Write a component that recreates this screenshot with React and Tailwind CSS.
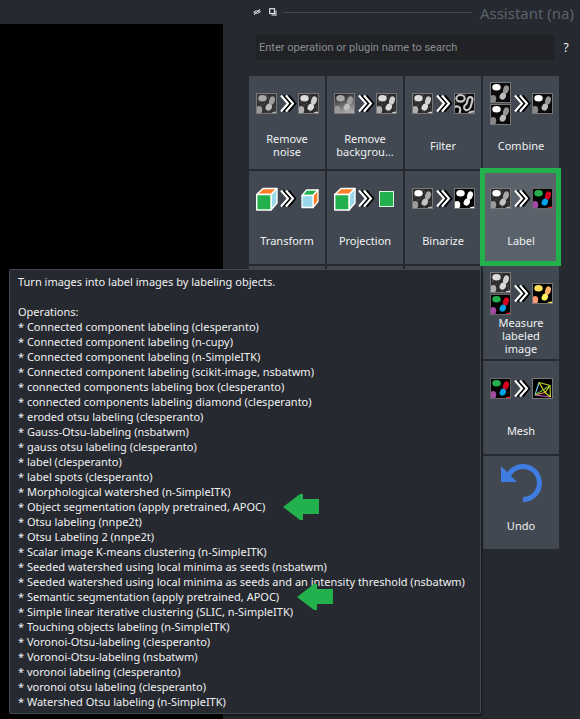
import React from "react";

const OPERATIONS = [
  "Connected component labeling (clesperanto)",
  "Connected component labeling (n-cupy)",
  "Connected component labeling (n-SimpleITK)",
  "Connected component labeling (scikit-image, nsbatwm)",
  "connected components labeling box (clesperanto)",
  "connected components labeling diamond (clesperanto)",
  "eroded otsu labeling (clesperanto)",
  "Gauss-Otsu-labeling (nsbatwm)",
  "gauss otsu labeling (clesperanto)",
  "label (clesperanto)",
  "label spots (clesperanto)",
  "Morphological watershed (n-SimpleITK)",
  "Object segmentation (apply pretrained, APOC)",
  "Otsu labeling (nnpe2t)",
  "Otsu Labeling 2 (nnpe2t)",
  "Scalar image K-means clustering (n-SimpleITK)",
  "Seeded watershed using local minima as seeds (nsbatwm)",
  "Seeded watershed using local minima as seeds and an intensity threshold (nsbatwm)",
  "Semantic segmentation (apply pretrained, APOC)",
  "Simple linear iterative clustering (SLIC, n-SimpleITK)",
  "Touching objects labeling (n-SimpleITK)",
  "Voronoi-Otsu-labeling (clesperanto)",
  "Voronoi-Otsu-labeling (nsbatwm)",
  "voronoi labeling (clesperanto)",
  "voronoi otsu labeling (clesperanto)",
  "Watershed Otsu labeling (n-SimpleITK)",
];

// Blob colours: top-left, upper lobe, lower lobe, bottom-left, bottom-right
const PALETTES = {
  gray: { bg: "#2c2c2c", c: ["#dcdcdc", "#d0d0d0", "#dcdcdc", "#b0b0b0", "#cccccc"], edge: "#777" },
  noisy: { bg: "#333", c: ["#a8a8a8", "#9c9c9c", "#bcbcbc", "#9c9c9c", "#acacac"], edge: "#777" },
  bright: { bg: "#2a2a2a", c: ["#ffffff", "#a8a8a8", "#c4c4c4", "#9c9c9c", "#b8b8b8"], edge: "#777" },
  combined: { bg: "#0c0c0c", c: ["#ffffff", "#949494", "#bcbcbc", "#888888", "#000000"], edge: "#777" },
  binary: { bg: "#000", c: ["#fff", "#fff", "#fff", "#fff", "#fff"], edge: "#777" },
  labels: { bg: "#000", c: ["#22b14c", "#d8001f", "#00a2e8", "#a349a4", "#ed1c24"], edge: "#666" },
  measured: { bg: "#000", c: ["#ffe05e", "#ffae66", "#fff35c", "#ff9673", "#fff35c"], edge: "#777" },
};

function Tile({ x, y, kind }) {
  const fade = kind === "faded";
  const p = PALETTES[fade ? "noisy" : kind];
  return (
    <svg x={x} y={y} width="21" height="21" viewBox="0 0 21 21">
      {fade && (
        <defs>
          <linearGradient id="haze" x1="0" y1="0" x2="0.3" y2="1">
            <stop offset="0" stopColor="#181818" />
            <stop offset="0.4" stopColor="#4a4a4a" />
            <stop offset="1" stopColor="#a4a4a4" />
          </linearGradient>
        </defs>
      )}
      <rect width="21" height="21" fill={fade ? "url(#haze)" : p.bg} />
      {(kind === "gray" || kind === "noisy" || kind === "bright") && (
        <path
          d="M10 2h2M12 4h1M2 9h2M5 12h2M8 10h1M9 16h2M11 19h2M17 14h2M18 17h1M1 2h1M9 13h1"
          stroke="#666"
          opacity="0.7"
        />
      )}
      <ellipse cx="6.5" cy="5.300" rx="4.200" ry="3.3" fill={p.c[0]} />
      <ellipse cx="16" cy="7.500" rx="2.800" ry="4.300" transform="rotate(18 16 7.5)" fill={p.c[1]} />
      <ellipse cx="12.800" cy="14.200" rx="3" ry="3.6" transform="rotate(30 12.8 14.2)" fill={p.c[2]} />
      <path d="M0 15C1 13 4 12 5.5 14C7 16 6 19 5 21H0Z" fill={p.c[3]} />
      <path d="M15 21C15.5 19 18 18.4 21 18.5V21Z" fill={p.c[4]} />
      <rect x="0.5" y="0.5" width="20" height="20" fill="none" stroke={p.edge} />
    </svg>
  );
}

function EdgeTile({ x, y }) {
  return (
    <svg x={x} y={y} width="21" height="21" viewBox="0 0 21 21">
      <rect width="21" height="21" fill="#0c0c0c" />
      <g fill="none" stroke="#c8c8c8" strokeWidth="2.100">
        <ellipse cx="6.5" cy="5.300" rx="4.200" ry="3.3" />
        <path d="M14 5.500C15 3.300 18.700 3.700 18.500 6.500C18.200 9 17.500 10.500 17 12.500C16.500 15.800 14 17.800 11.500 16.900C9 15.500 10 12.500 12 11.300C13.500 10.300 13 7.500 14 5.500Z" />
        <path d="M0 14.500C2.500 12.500 6 13.500 6.200 16C6.300 18 5.500 19.500 5.500 21" />
        <path d="M14.500 21C15 19 18 18.500 21 18.500" />
        <path d="M0 9L3 10M10 0L12 3" stroke="#555" strokeWidth="1" />
      </g>
      <rect x="0.5" y="0.5" width="20" height="20" fill="none" stroke="#777" />
    </svg>
  );
}

function MeshTile({ x, y }) {
  return (
    <svg x={x} y={y} width="21" height="21" viewBox="0 0 21 21">
      <rect x="0.5" y="0.5" width="20" height="20" fill="#000" stroke="#777" />
      <g fill="none" strokeWidth="1.2">
        <path d="M7 4.500L3 17" stroke="#7dc4ee" />
        <path d="M3 17L18.500 19" stroke="#d65bd0" />
        <path d="M7 4.500L18 7.500L18.500 19" stroke="#b5c82b" />
        <path d="M7 4.500L13 14.500L18 7.500M13 14.500L18.500 19" stroke="#d9e021" />
        <path d="M3 17L13 14.500" stroke="#f2a35c" />
        <path d="M3 17L18 7.500" stroke="#7bbf3a" />
      </g>
    </svg>
  );
}

function BigCube() {
  return (
    <g stroke="#fff" strokeWidth="1.4" strokeLinejoin="round">
      <path d="M0.700 17.500L7 11.500H21L15 17.500Z" fill="#ff7f27" />
      <path d="M15 17.500L21 11.500V26L15 33Z" fill="#99d9ea" />
      <path d="M0.700 17.500H15V33H0.700Z" fill="#22b14c" />
    </g>
  );
}

function SmallCube() {
  return (
    <g stroke="#fff" strokeWidth="1.3" strokeLinejoin="round">
      <path d="M46 18.500L50.500 13H62L57 18.500Z" fill="#22b14c" />
      <path d="M57 18.500L62 13V24.500L57 30.500Z" fill="#ff7f27" />
      <path d="M46 18.500H57V30.500H46Z" fill="#99d9ea" />
    </g>
  );
}

function Chevrons() {
  return (
    <g fill="none">
      <path d="M27 13.500L34.500 21.500L27 29.500M32.500 13.500L39 21.500L32.500 29.500" stroke="#000" strokeWidth="2.400" />
      <path d="M25 13.500L32 21.500L25 29.500M30 13.500L37 21.500L30 29.500" stroke="#fff" strokeWidth="2.100" />
    </g>
  );
}

function Pair({ children }) {
  return (
    <svg width="64" height="44" viewBox="-1 0 64 44" aria-hidden="true">
      {children}
      <Chevrons />
    </svg>
  );
}

const single = (from, to) => (
  <Pair>
    <Tile x={0} y={11} kind={from} />
    <Tile x={42} y={11} kind={to} />
  </Pair>
);

const TOOLS = [
  { label: "Remove noise", icon: single("noisy", "gray") },
  { label: "Remove backgrou...", icon: single("faded", "gray") },
  { label: "Filter", icon: <Pair><Tile x={0} y={11} kind="gray" /><EdgeTile x={42} y={11} /></Pair> },
  {
    label: "Combine",
    icon: (
      <Pair>
        <Tile x={0} y={0} kind="combined" />
        <Tile x={0} y={22} kind="combined" />
        <Tile x={42} y={11} kind="combined" />
      </Pair>
    ),
  },
  { label: "Transform", icon: <Pair><BigCube /><SmallCube /></Pair> },
  {
    label: "Projection",
    icon: (
      <Pair>
        <BigCube />
        <rect x="45.500" y="14.500" width="14" height="15" fill="#22b14c" stroke="#d5f5df" />
      </Pair>
    ),
  },
  { label: "Binarize", icon: single("bright", "binary") },
  { label: "Label", icon: single("bright", "labels"), active: true },
  { label: "" },
  { label: "" },
  { label: "" },
  {
    label: "Measure labeled image",
    icon: (
      <Pair>
        <Tile x={0} y={0} kind="gray" />
        <Tile x={0} y={22} kind="labels" />
        <Tile x={42} y={11} kind="measured" />
      </Pair>
    ),
  },
  { label: "Mesh", last: true, icon: <Pair><Tile x={0} y={11} kind="labels" /><MeshTile x={42} y={11} /></Pair> },
  {
    label: "Undo",
    last: true,
    icon: (
      <svg width="64" height="44" viewBox="-1 0 64 44" aria-hidden="true">
        <path d="M18.500 13A16.500 16.500 0 1 1 33 37.500" fill="none" stroke="#3f7de0" strokeWidth="5" />
        <path d="M11 4V20H27Z" fill="#3f7de0" />
      </svg>
    ),
  },
];

function ToolButton({ tool }) {
  return (
    <button
      type="button"
      aria-label={tool.label || "More operations"}
      className={`relative flex h-[93px] flex-col items-center pt-1.5 text-[11px] leading-[13px] text-[#f0f1f2] ${
        tool.active ? "bg-[#5a626c]" : "bg-[#414851]"
      } ${tool.last ? "col-start-4" : ""}`}
    >
      {tool.icon}
      <span className="flex h-[38px] w-full items-center justify-center px-2 text-center">{tool.label}</span>
      {tool.active && (
        <span className="pointer-events-none absolute -top-[3px] -right-0.5 -bottom-0.5 -left-[3px] z-10 border-5 border-[#22b14c]" />
      )}
    </button>
  );
}

function Arrow() {
  return (
    <svg
      className="absolute top-1/2 left-full ml-[18px] -translate-y-1/2"
      width="36"
      height="26"
      viewBox="0 0 36 26"
      aria-hidden="true"
    >
      <path d="M0 13L17 0H20V5H36V20H20V26H17Z" fill="#22b14c" />
    </svg>
  );
}

export default function App() {
  return (
    <div className="relative flex min-h-screen flex-col overflow-hidden bg-[#262930] pt-6 font-['Noto_Sans','Open_Sans',sans-serif] text-[#f0f1f2]">
      <div className="flex flex-1">
        <main className="flex-1 bg-black" />
        <aside className="-mt-6 w-[357px] pl-[26px]">
          <header className="flex h-6 items-start pr-1.5">
            <button type="button" aria-label="Hide panel" className="mt-2 ml-1">
              <svg width="8" height="8" viewBox="0 0 8 8">
                <path d="M0 4.500C2 1.500 6 1.500 8 3.500C6 6.500 2 6.500 0 4.500Z" fill="#a9adb3" />
                <circle cx="4" cy="4" r="1.200" fill="#4b5058" />
                <path d="M1 7L7 1" stroke="#d5d7da" />
              </svg>
            </button>
            <button type="button" aria-label="Float panel" className="mt-2 ml-2">
              <svg width="8" height="8" viewBox="0 0 8 8">
                <path d="M2.500 7H7V2.500" fill="none" stroke="#a9adb3" strokeWidth="1.500" />
                <rect x="0.700" y="0.700" width="4.800" height="4.800" fill="#262930" stroke="#e0e2e4" strokeWidth="1.200" />
              </svg>
            </button>
            <span className="mt-3 ml-1.5 h-px flex-1 bg-[#414851]" />
            <h1 className="mt-px ml-2 text-[15px] leading-6 whitespace-nowrap text-[#5a626c]">Assistant (na)</h1>
          </header>
          <div className="mt-[11px] flex items-center pl-[7px]">
            <input
              type="text"
              aria-label="Search operations"
              placeholder="Enter operation or plugin name to search"
              className="h-[25px] w-[298px] rounded-xs bg-[#202226] px-[3px] font-['Roboto','Noto_Sans',sans-serif] text-[11px] text-[#f0f1f2] outline-none placeholder:text-[#8a8c90]"
            />
            <button type="button" className="ml-2 w-2 text-xs">?</button>
          </div>
          <div className="mt-4 grid w-[310px] grid-cols-4 gap-0.5">
            {TOOLS.map((tool, i) => (
              <ToolButton key={i} tool={tool} />
            ))}
          </div>
        </aside>
      </div>
      <div
        role="tooltip"
        className="absolute top-[269px] left-[9px] z-20 w-[472px] rounded-xs border border-[#414851] bg-[#262930] px-2 py-1 text-[11px] leading-[15px] whitespace-nowrap shadow-[1px_2px_3px_rgba(0,0,0,0.5)]"
      >
        <p>Turn images into label images by labeling objects.</p>
        <p className="mt-[15px]">Operations:</p>
        <ul>
          {OPERATIONS.map((op) => (
            <li key={op}>
              <span className="relative">
                * {op}
                {op.includes("APOC") && <Arrow />}
              </span>
            </li>
          ))}
        </ul>
      </div>
    </div>
  );
}
